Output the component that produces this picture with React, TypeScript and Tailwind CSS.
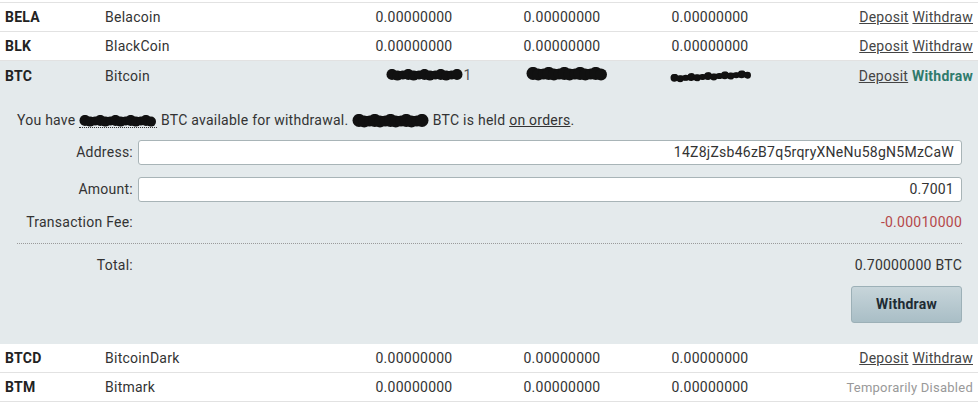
import React from "react";

const Blob = ({ w, h = 12, tilt = 0 }: { w: number; h?: number; tilt?: number }) => {
  const bumps = [];
  const n = Math.floor(w / 6);
  for (let i = 0; i <= n; i++) {
    const x = h / 2 + ((w - h) * i) / n;
    const r = h / 2 - 0.5 - ((i * 7) % 3) * 0.5;
    const y = h / 2 + (((i * 5) % 3) - 1) * 0.6;
    bumps.push(<circle key={i} cx={x} cy={y} r={Math.max(r, 2)} fill="#111" />);
  }
  return (
    <svg width={w} height={h} viewBox={`0 0 ${w} ${h}`} className="inline-block align-middle" style={{ transform: `rotate(${tilt}deg)` }}>
      <rect x={h / 2} y={2} width={w - h} height={h - 4} fill="#111" />
      {bumps}
    </svg>
  );
};

const Row = ({
  code,
  name,
  a,
  b,
  c,
  actions,
  active = false,
}: {
  code: string;
  name: string;
  a: React.ReactNode;
  b: React.ReactNode;
  c: React.ReactNode;
  actions: React.ReactNode;
  active?: boolean;
}) => (
  <div className={`grid grid-cols-[100px_240px_148px_148px_148px_1fr] h-[29px] items-center pt-[1px] ${active ? "" : "border-b border-[#e2e2e2]"}`}>
    <div className="pl-[5px] font-bold text-[#222]">{code}</div>
    <div className="pl-[5px]">{name}</div>
    <div className="text-center">{a}</div>
    <div className="text-center">{b}</div>
    <div className="text-center">{c}</div>
    <div className="text-right pr-[5px] whitespace-nowrap">{actions}</div>
  </div>
);

const Links = ({ active = false }: { active?: boolean }) => (
  <>
    <a className="underline text-[#444]">Deposit</a>{" "}
    <a className={active ? "font-bold text-[#2f7a6c]" : "underline text-[#444]"}>Withdraw</a>
  </>
);

export default function App() {
  const z = "0.00000000";
  return (
    <div className="w-[978px] h-[405px] bg-white text-[14px] tracking-[0.25px] text-[#333] overflow-hidden" style={{ fontFamily: "Roboto, 'Noto Sans', sans-serif" }}>
      <div className="h-[3px] border-b border-[#e2e2e2]" />
      <Row code="BELA" name="Belacoin" a={z} b={z} c={z} actions={<Links />} />
      <Row code="BLK" name="BlackCoin" a={z} b={z} c={z} actions={<Links />} />
      <div className="bg-[#e4eaec]">
        <Row
          active
          code="BTC"
          name="Bitcoin"
          a={
            <span className="inline-flex items-center pl-[30px]">
              <Blob w={77} h={12} />
              <span className="text-[#555]">1</span>
            </span>
          }
          b={
            <span className="inline-flex items-center pl-[10px]">
              <Blob w={82} h={14} />
            </span>
          }
          c={
            <span className="inline-flex items-center pl-[2px]">
              <Blob w={82} h={9} tilt={-3} />
            </span>
          }
          actions={<Links active />}
        />
        <div className="pl-[17px] pr-[16px] pt-[20px] pb-[21px]">
          <div className="h-[20px] leading-[20px] whitespace-nowrap">
            You have{" "}
            <span className="inline-block border-b border-dotted border-[#333] leading-[12px] align-middle">
              <Blob w={78} h={12} />
            </span>{" "}
            BTC available for withdrawal. <Blob w={77} h={14} /> BTC is held <a className="underline">on orders</a>.
          </div>
          <div className="mt-[10px] flex items-center gap-[5px]">
            <div className="w-[116px] text-right">Address:</div>
            <div className="flex-1 h-[25px] bg-white border border-[#a8b4b7] rounded-[3px] flex items-center justify-end pr-[7px]">
              14Z8jZsb46zB7q5rqryXNeNu58gN5MzCaW
            </div>
          </div>
          <div className="mt-[12px] flex items-center gap-[5px]">
            <div className="w-[116px] text-right">Amount:</div>
            <div className="flex-1 h-[25px] bg-white border border-[#a8b4b7] rounded-[3px] flex items-center justify-end pr-[7px]">
              0.7001
            </div>
          </div>
          <div className="mt-[10px] h-[20px] flex items-center justify-between">
            <div className="w-[116px] text-right whitespace-nowrap">Transaction Fee:</div>
            <div className="text-[#b5484a]">-0.00010000</div>
          </div>
          <div className="mt-[11px] border-t border-dotted border-[#9a9a9a]" />
          <div className="mt-[11px] h-[20px] flex items-center justify-between">
            <div className="w-[116px] text-right">Total:</div>
            <div>0.70000000 BTC</div>
          </div>
          <div className="mt-[11px] flex justify-end">
            <button className="w-[111px] h-[37px] rounded-[3px] border border-[#9cb0b7] bg-gradient-to-b from-[#c7d5da] to-[#a9bec6] font-bold text-[#1e2b33] text-[14px]">
              Withdraw
            </button>
          </div>
        </div>
      </div>
      <Row code="BTCD" name="BitcoinDark" a={z} b={z} c={z} actions={<Links />} />
      <Row code="BTM" name="Bitmark" a={z} b={z} c={z} actions={<span className="text-[#999] text-[13px]">Temporarily Disabled</span>} />
    </div>
  );
}
